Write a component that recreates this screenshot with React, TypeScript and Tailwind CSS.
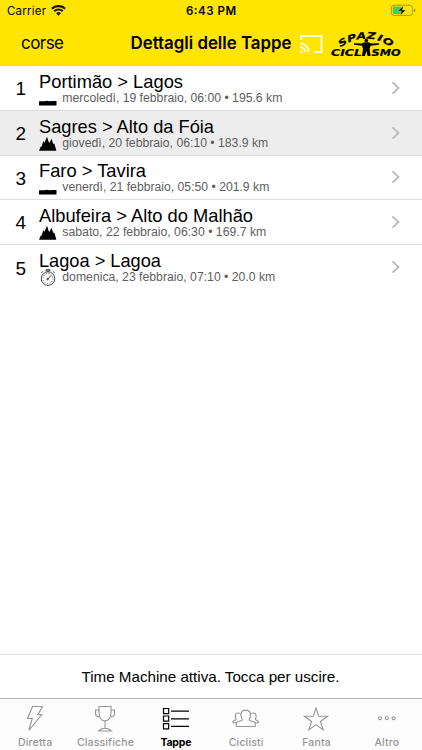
import { ReactNode } from "react";

type StageKind = "flat" | "mountain" | "timetrial";

const STAGES: { id: number; name: string; info: string; kind: StageKind; nameWidth: number; infoWidth: number }[] = [
  { id: 1, name: "Portimão > Lagos", info: "mercoledì, 19 febbraio, 06:00 • 195.6 km", kind: "flat", nameWidth: 144, infoWidth: 220 },
  { id: 2, name: "Sagres > Alto da Fóia", info: "giovedì, 20 febbraio, 06:10 • 183.9 km", kind: "mountain", nameWidth: 175, infoWidth: 206 },
  { id: 3, name: "Faro > Tavira", info: "venerdì, 21 febbraio, 05:50 • 201.9 km", kind: "flat", nameWidth: 107, infoWidth: 207 },
  { id: 4, name: "Albufeira > Alto do Malhão", info: "sabato, 22 febbraio, 06:30 • 169.7 km", kind: "mountain", nameWidth: 214, infoWidth: 204 },
  { id: 5, name: "Lagoa > Lagoa", info: "domenica, 23 febbraio, 07:10 • 20.0 km", kind: "timetrial", nameWidth: 122, infoWidth: 213 },
];

const LOGO_TOP = [
  { char: "S", x: 344, y: 44, angle: -30 },
  { char: "P", x: 352.5, y: 40, angle: -18 },
  { char: "A", x: 361.5, y: 38, angle: -5 },
  { char: "Z", x: 371, y: 38, angle: 5 },
  { char: "I", x: 379.3, y: 40, angle: 18 },
  { char: "O", x: 386.5, y: 43.5, angle: 29 },
];

function StageIcon({ kind }: { kind: StageKind }) {
  if (kind === "flat") {
    return (
      <svg width="18" height="18" viewBox="0 0 18 18" className="shrink-0">
        <path d="M0 15.6V11.2l5 .1 3-.5 2.5.5 3.5-.4 3.5.1v4.6z" />
      </svg>
    );
  }
  if (kind === "mountain") {
    return (
      <svg width="18" height="18" viewBox="0 0 18 18" className="shrink-0">
        <path d="M0 15.8 1.8 11.5l.8.2L4.3 6l1.2 1.7L8 1.8l1.8 5.4.8.5 1.9-4L14.3 9l1-.4L17.4 15.8z" />
      </svg>
    );
  }
  return (
    <svg width="18" height="18" viewBox="0 0 18 18" fill="none" stroke="#333" strokeWidth=".9" className="shrink-0">
      <circle cx="9" cy="9.6" r="6.8" />
      <circle cx="9" cy="9.6" r="5" strokeDasharray=".8 1.8" strokeWidth="1" />
      <path d="M7 .7h4v1.2H7zM9 1.8v1M2.2 3.9l1.7-1.4M15.8 3.9l-1.7-1.4M8.3 10.6 12 6.4" />
      <circle cx="8.6" cy="10.1" r=".8" />
    </svg>
  );
}

function Logo() {
  return (
    <svg width="74" height="30" viewBox="329 28 74 30" className="shrink-0">
      <g fontFamily="DejaVu Sans" fontWeight="bold" fontStyle="italic" textAnchor="middle" stroke="#000" strokeWidth=".2">
        {LOGO_TOP.map((l) => (
          <text key={l.char} fontSize="9.2" transform={`translate(${l.x} ${l.y}) rotate(${l.angle}) scale(1.35 1)`}>
            {l.char}
          </text>
        ))}
      </g>
      <g fontFamily="DejaVu Sans" fontWeight="bold" fontStyle="italic" fontSize="9.2" stroke="#000" strokeWidth=".2">
        <text x="331" y="54.8" textLength="31" lengthAdjust="spacingAndGlyphs">CICL</text>
        <text x="371.5" y="54.8" textLength="29" lengthAdjust="spacingAndGlyphs">SMO</text>
      </g>
      <circle cx="366.3" cy="39.5" r="1.8" />
      <path d="M354 42.3l7.5.2 3-1.3h3.6l3.4 1.3 7.5-.2v1.5l-8.4 1-1 3 1 7.2h-3l-1.3-5.2-1.3 5.2h-3l1-7.2-1-3-8-1z" />
    </svg>
  );
}

function Header() {
  return (
    <header className="h-[66px] shrink-0 border-b border-[#f3e032] bg-[#ffe500]">
      <div className="grid h-[22px] grid-cols-3 items-center pr-[6px] pl-[7px] font-[Inter] text-[11.5px] text-[#181600]">
        <div className="flex items-center gap-[5px]">
          <svg width="39" height="16">
            <text x="0" y="12" textLength="39">Carrier</text>
          </svg>
          <svg width="15" height="11" viewBox="0 0 15 11" fill="none" stroke="currentColor" strokeWidth="2.2" className="-mt-[2px]">
            <path d="M.9 3.7a9.6 9.6 0 0 1 13.2 0M3.3 6.2a6.1 6.1 0 0 1 8.4 0" />
            <path d="M7.5 10.7 5.1 8.3a3.4 3.4 0 0 1 4.8 0z" fill="currentColor" stroke="none" />
          </svg>
        </div>
        <svg width="51" height="16" className="justify-self-center">
          <text x="0" y="12" textLength="50" fontWeight="600">6:43 PM</text>
        </svg>
        <svg width="26" height="13" viewBox="0 0 26 13" className="-mt-[1px] justify-self-end">
          <rect x="1.4" y="1.2" width="21.2" height="10.2" rx="2.8" fill="none" stroke="#a99a18" />
          <rect x="2.8" y="2.6" width="8.7" height="7.4" rx="1.4" fill="#43cf63" />
          <path d="M24 4.5v3.8q1.5-.7 1.5-1.9T24 4.5" fill="#a99a18" />
          <path d="M13.5 1.8 7.7 7h3.6l-.9 4.3L15.9 6h-3.5z" fill="#111" stroke="#ffe500" strokeWidth=".4" />
        </svg>
      </div>
      <div className="flex h-[43px] items-center pl-[21px]">
        <svg width="44" height="24" className="shrink-0 font-[Inter] text-[17px]">
          <text x="0" y="17.4" textLength="43">corse</text>
        </svg>
        <svg width="163" height="24" className="ml-[65px] shrink-0 font-[Inter] text-[17px] font-semibold">
          <text x="0.5" y="17.4" textLength="161" lengthAdjust="spacingAndGlyphs">Dettagli delle Tappe</text>
        </svg>
        <svg width="24" height="20" viewBox="0 0 24 20" fill="none" stroke="#fffde0" strokeWidth="2" className="ml-[6px] shrink-0">
          <path d="M2 6V2h20.5v16H15M1 9.2a9 9 0 0 1 9 9M1 13a5.3 5.3 0 0 1 5.3 5.3" />
          <path d="M1 16.2V19h2.8A2.8 2.8 0 0 0 1 16.2z" fill="#fffde0" stroke="none" />
        </svg>
        <div className="ml-[6px]">
          <Logo />
        </div>
      </div>
    </header>
  );
}

function Tab({ label, active, children }: { label: string; active?: boolean; children: ReactNode }) {
  return (
    <button className={`flex flex-col items-center ${active ? "text-black" : "text-[#969696]"}`}>
      <svg width="30" height="32" viewBox="0 0 30 32" fill="none" stroke="currentColor" strokeWidth="1.1" className="mt-[4px]">
        {children}
      </svg>
      <span className={`font-[Inter] text-[10.5px] leading-[15px] ${active ? "font-bold tracking-[-.2px]" : "font-medium tracking-[.15px]"}`}>{label}</span>
    </button>
  );
}

export default function App() {
  return (
    <div className="flex h-[750px] w-[422px] flex-col overflow-hidden bg-white font-['Liberation_Sans',sans-serif] text-black">
      <Header />
      <main className="flex-1">
        {STAGES.map((stage) => (
          <div
            key={stage.id}
            className={`flex h-[44.75px] items-center ${stage.id < 5 ? "border-b border-[#dedede]" : ""} ${stage.id === 2 ? "bg-[#ededed]" : ""}`}
          >
            <span className="w-[39px] pt-[3px] pl-[15.5px] text-[19px]">{stage.id}</span>
            <div className="flex flex-1 flex-col">
              <svg width="240" height="24" className="text-[19px]">
                <text x="0" y="20.2" textLength={stage.nameWidth} lengthAdjust="spacingAndGlyphs">{stage.name}</text>
              </svg>
              <div className="-mt-[2px] flex h-[18px] gap-[5px]">
                <StageIcon kind={stage.kind} />
                <svg width="240" height="18" className="text-[12.5px]" fill="#5e5e5e">
                  <text x="0.3" y="12.3" textLength={stage.infoWidth} lengthAdjust="spacingAndGlyphs">{stage.info}</text>
                </svg>
              </div>
            </div>
            <svg width="10" height="14" viewBox="0 0 10 14" fill="none" stroke="#b9b9b9" strokeWidth="1.8" className="mr-[21px]">
              <path d="m1.5 1.4 6 5.6-6 5.6" />
            </svg>
          </div>
        ))}
      </main>
      <button className="flex h-[44px] shrink-0 items-center justify-center border-t border-[#e2e2e2]">
        <svg width="272" height="24" className="text-[15px]">
          <text x="6.5" y="17" textLength="258" lengthAdjust="spacingAndGlyphs">Time Machine attiva. Tocca per uscire.</text>
        </svg>
      </button>
      <nav className="grid h-[52px] shrink-0 grid-cols-6 items-start border-t border-[#b2b2b2] bg-[#fdfdfd]">
        <Tab label="Diretta">
          <path d="M12.5 3.5h10l-4.5 8h3.8L8.8 27.5l3.4-12H7.5z" />
        </Tab>
        <Tab label="Classifiche">
          <path d="M9 3.5h12v6.5c0 4-2 7.8-6 7.8S9 14 9 10zM9 7H5.5v3.5c0 2.2 1.6 3.5 4.2 3.5M21 7h3.5v3.5c0 2.2-1.6 3.5-4.2 3.5M15 18v7M8.5 28q2.5-2.8 6.5-2.8t6.5 2.8z" />
        </Tab>
        <Tab label="Tappe" active>
          <path d="M2.5 5.5h5.2v5.2H2.5zM2.5 13h5.2v5.2H2.5zM2.5 20.7h5.2v5.2H2.5zM10 8.2h18M10 15.8h18M10 23.3h18" strokeWidth="1.2" />
        </Tab>
        <Tab label="Ciclisti">
          <path d="M5.2 23.5v-3q0-1.8 3.2-2.3 2.8-.4 2.8-1.4 0-.8-.5-1.6-.7-1.3-.7-3.7 0-4.4 4.7-4.4t4.7 4.4q0 2.4-.7 3.7-.5.8-.5 1.6 0 1 2.8 1.4 3.2.5 3.2 2.3v3z" />
          <path d="M10.1 11.5Q9.2 10 7.3 10q-3 0-3 3.2 0 1.5.6 2.4.6 1.2-1.3 1.6-1.7.5-1.7 2.5h3.3M19.3 11.5q.9-1.5 2.8-1.5 3 0 3 3.2 0 1.5-.6 2.4-.6 1.2 1.3 1.6 1.7.5 1.7 2.5h-3.3" />
        </Tab>
        <Tab label="Fanta">
          <path d="m15 5 2.7 8.3h8.8l-7.1 5.2 2.8 8.4-7.2-5.1-7.2 5.1 2.8-8.4-7.1-5.2h8.8z" />
        </Tab>
        <Tab label="Altro">
          <circle cx="8" cy="15.2" r="1.5" />
          <circle cx="14.8" cy="15.2" r="1.5" />
          <circle cx="21.6" cy="15.2" r="1.5" />
        </Tab>
      </nav>
    </div>
  );
}
